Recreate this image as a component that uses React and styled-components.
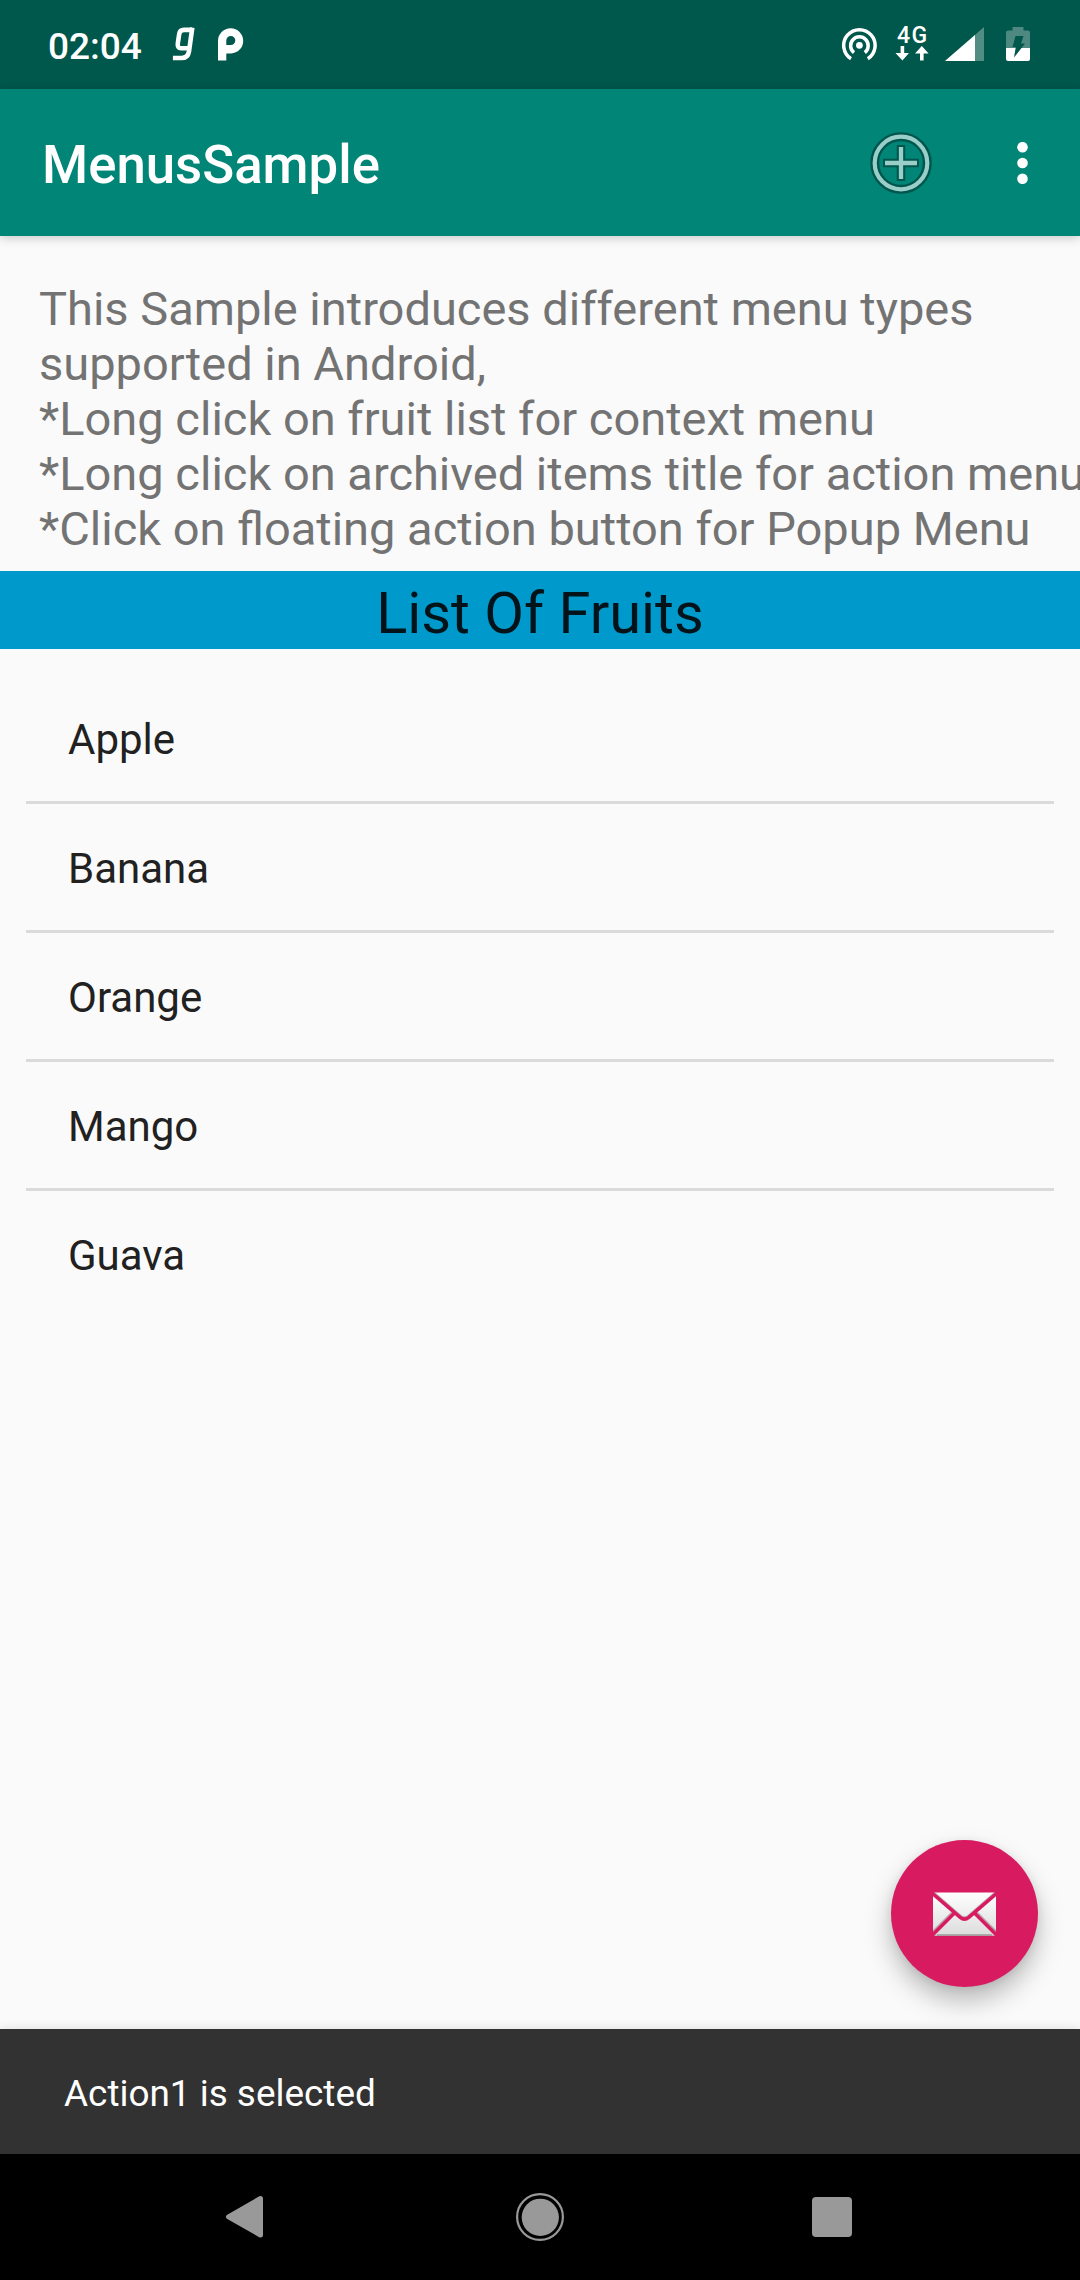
import React from "react";
import styled, { createGlobalStyle } from "styled-components";

const GlobalStyle = createGlobalStyle`
  *, *::before, *::after { box-sizing: border-box; }
  html, body { margin: 0; padding: 0; background: #fafafa; }
  body { font-family: Roboto, "Liberation Sans", sans-serif; }
  svg { display: block; flex: none; }
`;

const Screen = styled.div`
  width: 1080px;
  height: 2280px;
  display: flex;
  flex-direction: column;
  overflow: hidden;
  background: #fafafa;
`;

const StatusBar = styled.header`
  flex: none;
  height: 89px;
  padding: 0 50px 1px 48px;
  display: flex;
  align-items: center;
  justify-content: space-between;
  background: #00574b;
  color: #fff;
`;

const StatusGroup = styled.div`
  display: flex;
  align-items: flex-start;
  height: 34px;
  gap: ${(p) => p.$gap}px;
`;

const Clock = styled.time`
  font-size: 37px;
  font-weight: 500;
  line-height: 40px;
  width: 101px;
`;

const Network = styled.div`
  width: 34px;
  height: 34px;
  display: flex;
  flex-direction: column;
  align-items: center;
  gap: 3px;
`;

const NetworkLabel = styled.span`
  font-size: 23px;
  font-weight: 500;
  line-height: 18px;
  height: 16px;
  letter-spacing: 1.5px;
  margin-right: -1.5px;
`;

const AppBar = styled.div`
  flex: none;
  height: 147px;
  padding: 0 47px 0 42px;
  display: flex;
  align-items: center;
  background: #008577;
  box-shadow: 0 2px 10px rgba(0, 0, 0, 0.2);
  z-index: 1;
`;

const Title = styled.h1`
  flex: 1;
  margin: 0;
  padding-top: 4px;
  color: #fff;
  font-size: 52.75px;
  font-weight: 500;
  line-height: 62px;
`;

const IconButton = styled.button`
  display: flex;
  padding: 0;
  border: 0;
  background: none;
  margin-left: ${(p) => p.$gap || 0}px;
`;

const Content = styled.main`
  flex: 1;
  min-height: 0;
  position: relative;
`;

const Description = styled.p`
  margin: 0;
  padding: 45px 0 15px 39px;
  color: #737373;
  font-size: 47px;
  line-height: 55px;
  white-space: pre;
`;

const SectionHeader = styled.h2`
  margin: 0;
  height: 78px;
  padding-top: 6px;
  display: flex;
  align-items: center;
  justify-content: center;
  background: #0099cc;
  color: #021419;
  font-size: 57.75px;
  font-weight: 400;
  line-height: 68px;
`;

const FruitList = styled.ul`
  margin: 0;
  padding: 26px;
  list-style: none;
`;

const FruitRow = styled.li`
  height: 129px;
  padding: 4px 42px 0;
  display: flex;
  align-items: center;
  border-bottom: 3px solid #dadada;
  color: #212121;
  font-size: 42px;
  line-height: 50px;

  &:last-child { border-bottom-color: transparent; }
`;

const Fab = styled.button`
  position: absolute;
  right: 42px;
  bottom: 42px;
  width: 147px;
  height: 147px;
  padding: 0;
  border: 0;
  border-radius: 50%;
  display: flex;
  align-items: center;
  justify-content: center;
  background: #d81b60;
  box-shadow: 0 14px 26px rgba(0, 0, 0, 0.26), 0 2px 10px rgba(0, 0, 0, 0.08);
`;

const Snackbar = styled.div`
  flex: none;
  height: 125px;
  padding: 4px 64px 0;
  display: flex;
  align-items: center;
  background: #323232;
  color: #fff;
  font-size: 36.9px;
  line-height: 44px;
  box-shadow: 0 0 10px rgba(0, 0, 0, 0.12);
`;

const NavBar = styled.nav`
  flex: none;
  height: 126px;
  padding: 0 227px 0 225px;
  display: flex;
  align-items: center;
  justify-content: space-between;
  background: #000;
`;

const GIcon = () => (
  <svg width="23" height="34" viewBox="0 0 23 34" fill="none" stroke="#fff" strokeWidth="4.600">
    <path d="M19.800 2.900H12Q7.800 2.900 7.200 7L5.800 16.500Q5.300 21.200 9 21.200H17" />
    <path d="M20.300 .6L17 24.500Q15.900 31 9.500 31H.9" />
  </svg>
);

const PIcon = () => (
  <svg width="26" height="34" viewBox="0 0 26 34">
    <path
      fill="#fff"
      fillRule="evenodd"
      d="M0 33.500V13.500A12.600 12.600 0 1 1 13 26.500H8.300V33.500ZM8.300 18H12.800A4.500 4.500 0 1 0 8.300 13.500Z"
    />
  </svg>
);

const HotspotIcon = () => (
  <svg width="38" height="34" viewBox="0 0 38 34" fill="none" stroke="#fff" strokeWidth="3.5">
    <circle cx="18.4" cy="18.3" r="3.4" fill="#fff" stroke="none" />
    <path d="M13 25.6A8.8 8.8 0 1 1 23.8 25.6" />
    <path d="M10 31.7A15.7 15.7 0 1 1 26.8 31.7" />
  </svg>
);

const DataArrows = () => (
  <svg width="34" height="15" viewBox="0 0 34 15" fill="#fff">
    <path d="M5.6 0h3.6v7H14L7.4 14.6 .5 7h5.1z" />
    <path d="M25 14.6h3.6v-7h5L26.8 0 20 7.6h5z" />
  </svg>
);

const SignalIcon = () => (
  <svg width="45" height="34" viewBox="0 0 45 34">
    <path d="M39 0V34H0z" fill="#fff" fillOpacity=".32" />
    <path d="M30 8V34H0z" fill="#fff" />
  </svg>
);

const BatteryIcon = () => (
  <svg width="24" height="34" viewBox="0 0 24 34">
    <path d="M6.5 0h11v3.5H22q2 0 2 2V21H0V5.500q0-2 2-2h4.500z" fill="#4d8981" />
    <path d="M0 21h24v11q0 2-2 2H2q-2 0-2-2z" fill="#fff" />
    <path d="M9.500 9h8L15 16.500h4L8 30.500l1.800-10.500H6.500z" fill="#00574b" />
  </svg>
);

const AddIcon = () => (
  <svg width="64" height="64" viewBox="0 0 64 64" fill="none">
    <g stroke="#00564d">
      <circle cx="32" cy="32" r="26.300" strokeWidth="9" />
      <path d="M32 14V50M14 32H50" strokeWidth="8.500" />
    </g>
    <g stroke="#99cec9">
      <circle cx="32" cy="32" r="26.300" strokeWidth="4.200" />
      <path d="M32 16V48M16 32H48" strokeWidth="4.300" />
    </g>
  </svg>
);

const OverflowIcon = () => (
  <svg width="21" height="42" viewBox="0 0 21 42" fill="#fff">
    <circle cx="10.500" cy="5.200" r="5.300" />
    <circle cx="10.500" cy="21" r="5.300" />
    <circle cx="10.500" cy="36.800" r="5.300" />
  </svg>
);

const MailIcon = () => (
  <svg width="63" height="44" viewBox="0 0 63 44">
    <defs>
      <linearGradient id="paper" x1="0" y1="0" x2="0" y2="44" gradientUnits="userSpaceOnUse">
        <stop offset="0" stopColor="#fff" />
        <stop offset="1" stopColor="#dcdcdc" />
      </linearGradient>
    </defs>
    <rect y=".5" width="63" height="43.200" fill="url(#paper)" />
    <path d="M4 42.900H59" stroke="#999" strokeWidth="1.500" />
    <g fill="none" stroke="#8a6a75" strokeOpacity=".5" strokeWidth="3.400">
      <path d="M-1 -.2L27.200 24.200Q31.500 27.700 35.800 24.200L64 -.2" />
      <path d="M19.500 21L-1 41.500M43.500 21L64 41.500" />
    </g>
    <g fill="none" stroke="#d81b60" strokeWidth="3.500">
      <path d="M-1 1L27.200 25.400Q31.500 28.900 35.800 25.400L64 1" />
      <path d="M21.500 21L-1 43.500M41.500 21L64 43.500" />
    </g>
  </svg>
);

const BackIcon = () => (
  <svg width="43" height="44" viewBox="0 0 43 44" fill="#999" stroke="#999" strokeWidth="5" strokeLinejoin="round">
    <path d="M35.500 3.500V40L3.500 21.800z" />
  </svg>
);

const HomeIcon = () => (
  <svg width="48" height="48" viewBox="0 0 48 48">
    <circle cx="24" cy="24" r="22.900" fill="none" stroke="#999" strokeWidth="2.200" />
    <circle cx="24.300" cy="24.300" r="18.600" fill="#999" />
  </svg>
);

const RecentsIcon = () => (
  <svg width="41" height="40" viewBox="0 0 41 40">
    <rect width="40" height="40" rx="4" fill="#999" />
  </svg>
);

const intro = [
  "This Sample introduces different menu types",
  "supported in Android,",
  "*Long click on fruit list for context menu",
  "*Long click on archived items title for action menu",
  "*Click on floating action button for Popup Menu",
].join("\n");

const fruits = ["Apple", "Banana", "Orange", "Mango", "Guava"];

export default function App() {
  return (
    <Screen>
      <GlobalStyle />
      <StatusBar>
        <StatusGroup $gap={23}>
          <Clock>02:04</Clock>
          <GIcon />
          <PIcon />
        </StatusGroup>
        <StatusGroup $gap={16}>
          <HotspotIcon />
          <Network>
            <NetworkLabel>4G</NetworkLabel>
            <DataArrows />
          </Network>
          <SignalIcon />
          <BatteryIcon />
        </StatusGroup>
      </StatusBar>
      <AppBar>
        <Title>MenusSample</Title>
        <IconButton aria-label="Add">
          <AddIcon />
        </IconButton>
        <IconButton aria-label="More options" $gap={79}>
          <OverflowIcon />
        </IconButton>
      </AppBar>
      <Content>
        <Description>{intro}</Description>
        <SectionHeader>List Of Fruits</SectionHeader>
        <FruitList>
          {fruits.map((name) => (
            <FruitRow key={name}>{name}</FruitRow>
          ))}
        </FruitList>
        <Fab aria-label="Mail">
          <MailIcon />
        </Fab>
      </Content>
      <Snackbar>Action1 is selected</Snackbar>
      <NavBar>
        <BackIcon />
        <HomeIcon />
        <RecentsIcon />
      </NavBar>
    </Screen>
  );
}
